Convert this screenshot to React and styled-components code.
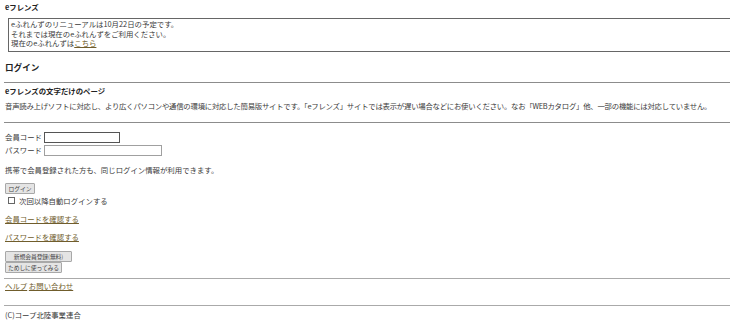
import React from 'react';
import styled, { createGlobalStyle } from 'styled-components';

const GlobalStyle = createGlobalStyle`
  html, body {
    margin: 0;
    padding: 0;
    background: #fff;
  }
  body {
    font-family: "Noto Sans CJK JP", "Noto Sans", sans-serif;
    color: #3a3a3a;
    font-size: 7.4px;
    line-height: 10px;
    overflow: hidden;
  }
`;

function App() {
  return (
    <Page>
      <GlobalStyle />
      <Title>eフレンズ</Title>
      <Notice>
        <div>eふれんずのリニューアルは10月22日の予定です。</div>
        <div>それまでは現在のeふれんずをご利用ください。</div>
        <div>
          現在のeふれんずは<Link href="#">こちら</Link>
        </div>
      </Notice>

      <Heading>ログイン</Heading>
      <Rule $top={9} $color="#8c8c8c" />

      <SubTitle>eフレンズの文字だけのページ</SubTitle>
      <Text $top={5} $spacing={-0.25}>
        音声読み上げソフトに対応し、より広くパソコンや通信の環境に対応した簡易版サイトです。「eフレンズ」サイトでは表示が遅い場合などにお使いください。なお「WEBカタログ」他、一部の機能には対応していません。
      </Text>
      <Rule $top={11} $color="#8c8c8c" />

      <Form>
        <Field $top={9}>
          <Label>会員コード</Label>
          <Input $w={76} $border="#555" />
        </Field>
        <Field $top={2}>
          <Label>パスワード</Label>
          <Input $w={118} $border="#a0a0a0" type="password" />
        </Field>
      </Form>

      <Text $top={9}>携帯で会員登録された方も、同じログイン情報が利用できます。</Text>

      <Button $top={8} $w={30}>ログイン</Button>
      <Check>
        <Box />
        次回以降自動ログインする
      </Check>

      <LinkLine $top={8}>
        <Link href="#">会員コードを確認する</Link>
      </LinkLine>
      <LinkLine $top={8}>
        <Link href="#">パスワードを確認する</Link>
      </LinkLine>

      <Button $top={9} $w={67}>新規会員登録(無料)</Button>
      <Button $top={0} $w={57}>ためしに使ってみる</Button>
      <Rule $top={5} $color="#aaa" />

      <LinkLine $top={2}>
        <Link href="#">ヘルプ</Link> <Link href="#">お問い合わせ</Link>
      </LinkLine>
      <Rule $top={14} $color="#aaa" />

      <Text $top={4}>(C)コープ北陸事業連合</Text>
    </Page>
  );
}

const Page = styled.div`
  padding: 0 0 0 4px;
  width: 726px;
`;

const Title = styled.div`
  margin-top: 2px;
  padding-left: 1px;
  height: 10px;
  font-weight: bold;
  color: #222;
`;

const Notice = styled.div`
  margin: 6px 0 0 4px;
  padding: 0 2px 3px 2px;
  border: 1px solid #666;
  border-right: none;
  line-height: 9.5px;
`;

const Heading = styled.div`
  margin-top: 9px;
  padding-left: 1px;
  height: 12px;
  line-height: 12px;
  font-size: 8.6px;
  font-weight: bold;
  color: #222;
`;

const Rule = styled.div`
  margin-top: ${(p) => p.$top}px;
  height: 1px;
  background: ${(p) => p.$color};
`;

const SubTitle = styled.div`
  margin-top: 3px;
  padding-left: 1px;
  height: 10px;
  font-weight: bold;
  color: #222;
`;

const Text = styled.div`
  margin-top: ${(p) => p.$top}px;
  padding-left: 1px;
  height: 10px;
  white-space: nowrap;
  letter-spacing: ${(p) => p.$spacing || 0}px;
`;

const Form = styled.div`
  display: flex;
  flex-direction: column;
`;

const Field = styled.div`
  margin-top: ${(p) => p.$top}px;
  display: flex;
  align-items: center;
  height: 11px;
  padding-left: 1px;
`;

const Label = styled.span`
  width: 39px;
  white-space: nowrap;
`;

const Input = styled.input`
  box-sizing: border-box;
  width: ${(p) => p.$w}px;
  height: 11px;
  margin: 0;
  padding: 0 1px;
  border: 1px solid ${(p) => p.$border};
  font-size: 7px;
  background: #fff;
  outline: none;
`;

const Button = styled.button`
  display: block;
  box-sizing: border-box;
  margin: ${(p) => p.$top}px 0 0 1px;
  width: ${(p) => p.$w}px;
  height: 11px;
  padding: 0;
  border: 1px solid #a8a8a8;
  border-radius: 1px;
  background: #e4e4e4;
  color: #444;
  font-family: "Noto Sans CJK JP", sans-serif;
  font-size: 5.8px;
  line-height: 9px;
  white-space: nowrap;
  letter-spacing: -0.1px;
`;

const Check = styled.div`
  margin-top: 2px;
  padding-left: 4px;
  height: 10px;
  display: flex;
  align-items: center;
  gap: 4px;
`;

const Box = styled.span`
  display: inline-block;
  width: 5px;
  height: 5px;
  border: 1px solid #666;
  background: #fff;
`;

const LinkLine = styled.div`
  margin-top: ${(p) => p.$top}px;
  padding-left: 1px;
  height: 10px;
`;

const Link = styled.a`
  color: #705d2c;
  text-decoration: underline;
`;

export default App;
